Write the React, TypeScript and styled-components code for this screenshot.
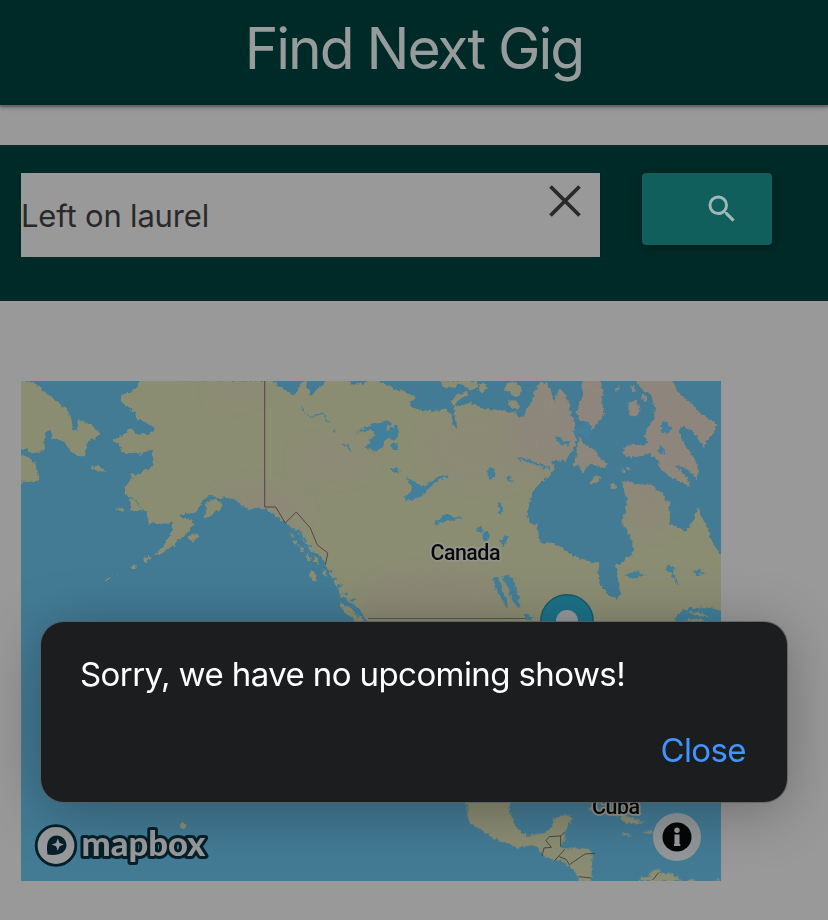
import React from 'react';
import styled, { createGlobalStyle } from 'styled-components';

const GlobalStyle = createGlobalStyle`
  * { box-sizing: border-box; }
  body {
    margin: 0;
    background: #999999;
    font-family: Inter, "Liberation Sans", sans-serif;
    overflow: hidden;
  }
`;

const Page = styled.div`
  width: 828px;
  height: 920px;
  overflow: hidden;
  background: #999999;
`;

const NavBar = styled.header`
  height: 105px;
  display: flex;
  justify-content: center;
  background: #002a27;
  box-shadow: 0 3px 3px rgba(0, 0, 0, 0.18), 0 1px 8px rgba(0, 0, 0, 0.12), 0 2px 1px rgba(0, 0, 0, 0.14);
`;

const Brand = styled.h1`
  margin: 0;
  font-size: 57px;
  line-height: 98px;
  font-weight: 400;
  letter-spacing: -2.05px;
  white-space: nowrap;
  color: #969c9b;
`;

const SearchBar = styled.section`
  height: 156px;
  margin-top: 40px;
  padding: 28px 21px 0;
  display: flex;
  align-items: flex-start;
  gap: 42px;
  background: #002a27;
`;

const SearchField = styled.div`
  width: 579px;
  height: 84px;
  padding: 0 17px 0 0;
  display: flex;
  justify-content: space-between;
  background: #999999;
`;

const Query = styled.span`
  line-height: 86px;
  font-size: 31px;
  letter-spacing: -0.18px;
  color: #292929;
`;

const IconButton = styled.button`
  width: 36px;
  height: 36px;
  margin-top: 10px;
  padding: 0;
  border: 0;
  background: none;
  svg { display: block; }
`;

const SubmitButton = styled.button`
  width: 130px;
  height: 72px;
  padding: 0 32px 0 0;
  display: flex;
  align-items: center;
  justify-content: flex-end;
  border: 0;
  border-radius: 4px;
  background: #105f5d;
  box-shadow: 0 4px 5px rgba(0, 0, 0, 0.16), 0 2px 8px rgba(0, 0, 0, 0.12);
`;

const MapFrame = styled.main`
  width: 700px;
  height: 500px;
  margin: 80px 0 0 21px;
  svg { display: block; }
`;

const Dialog = styled.div`
  position: absolute;
  left: 41px;
  top: 622px;
  width: 746px;
  height: 180px;
  padding: 31px 41px 0 39px;
  display: flex;
  flex-direction: column;
  border-radius: 23px;
  background: #1c1d1f;
  box-shadow: 0 0 0 1px rgba(90, 92, 94, 0.75), 0 8px 60px rgba(0, 0, 0, 0.3);
`;

const Message = styled.p`
  margin: 0;
  font-size: 33px;
  line-height: 42px;
  letter-spacing: -0.59px;
  white-space: nowrap;
  color: #ffffff;
`;

const CloseButton = styled.button`
  align-self: flex-end;
  margin: 34px 0 0;
  padding: 0;
  border: 0;
  background: none;
  font: 400 33px/42px Inter, "Liberation Sans", sans-serif;
  letter-spacing: -0.6px;
  color: #4293ff;
`;

const MapLabel = styled.text`
  font-family: Roboto, sans-serif;
  font-weight: 500;
  font-size: 21.5px;
  fill: #08090a;
  stroke: #93948c;
  stroke-width: 3.5px;
  stroke-linejoin: round;
  paint-order: stroke;
`;

const Wordmark = styled.text`
  font-family: Lato, sans-serif;
  font-weight: 900;
  font-size: 35px;
  fill: #999a9c;
  stroke: #06202b;
  stroke-width: 6px;
  stroke-linejoin: round;
  paint-order: stroke;
`;

const MAINLAND =
  'M358 30L352 50 340 64 322 68 304 74 302 92 315 105 330 115 345 130 352 148 372 153 384 160 388 167 404 172 400 183 385 195 365 190 345 192 342 178 330 175 318 188 300 198 278 212 295 222 305 232 302 245 320 252 345 248 365 252 385 242 396 240 395 252 400 270 398 290 385 298 360 308 345 318 334 330 318 345 314 370 325 380 350 390 360 405 365 422 372 415 380 430 384 450 386 464 400 456 415 462 430 456 445 462 460 455 455 475 452 495 440 510 430 530 410 545 402 556 415 556 430 548 445 535 465 528 475 510 490 500 505 485 520 465 518 450 505 445 480 440 485 432 515 430 535 420 541 402 552 388 570 378 590 380 600 385 625 380 650 392 665 408 690 418 720 415 735 418 760 430 780 448 800 460 812 472 826 480 840 498 855 520 872 545 890 550 905 565 920 590 928 610 940 635 955 655 962 680 978 688 1000 705 1022 722 1035 745 1045 760V900H2110V565L2085 530 2070 500 2060 470 2050 450 2042 430 2035 410 2025 430 2020 455 2005 475 1990 482 1970 470 1955 465 1948 470 1950 440 1945 420 1952 395 1935 388 1928 370 1910 360 1898 345 1880 345 1860 345 1840 340 1820 332 1810 335 1812 360 1820 390 1818 420 1805 460 1820 480 1835 510 1840 545 1825 560 1810 575 1788 585 1792 610 1795 640 1800 670 1790 690 1765 675 1750 655 1738 640 1735 610 1738 580 1710 575 1680 565 1645 548 1620 530 1595 518 1560 520 1555 490 1552 465 1525 460 1522 430 1530 390 1545 355 1570 330 1595 310 1605 290 1595 278 1610 270 1635 272 1650 250 1665 225 1668 205 1660 180 1665 165 1652 130 1645 100 1635 75 1620 55 1610 75 1602 100 1592 60 1580 40 1560 38 1545 60 1540 85 1530 105 1520 115 1512 142 1492 138 1488 125 1465 128 1440 120 1410 118 1385 118 1370 105 1350 98 1330 105 1305 108 1302 130 1308 150 1313 180 1300 165 1294 135 1280 115 1250 122 1210 122 1175 112 1170 95 1190 85 1180 75 1130 60 1105 45 1080 38V30H1040L1030 46 1015 38 1000 46 985 30H918L905 50 890 58 885 70 872 77 868 60 858 50 862 34 848 36 832 58 830 76 805 65 780 52 758 33Z';

const ISLANDS = [
  'M0 33H25L50 45 75 65 105 90 130 110 150 130 155 155 160 180 175 185 172 150 190 155 215 165 240 190 225 205 205 212 200 235 195 255 180 262 160 250 145 235 130 212 115 210 95 205 92 180 80 185 72 210 75 235 60 248 35 250 15 235 0 240Z',
  'M0 255L20 258 45 280 55 310 58 330 35 335 0 335Z',
  'M1845 30L1870 60 1892 75 1904 110 1905 145 1880 180 1875 200 1885 215 1870 228 1840 222 1815 230 1810 250 1830 262 1860 258 1890 250 1912 270 1925 300 1960 325 1990 340 2012 352 2000 325 1980 300 1963 290 1975 284 2005 300 2030 325 2035 300 2025 270 2005 240 1985 210 1976 185 1985 170 2000 172 2020 185 2040 215 2052 230 2065 205 2080 190 2090 165 2070 150 2040 130 2020 105 2000 90 1980 75 1965 50 1960 30Z',
  'M1690 30H1740L1748 60 1745 100 1752 130 1730 160 1715 180 1700 160 1680 150 1670 130 1680 100 1692 75 1685 50Z',
  'M1680 200L1695 225 1725 240 1740 265 1765 283 1750 292 1725 285 1705 285 1685 308 1675 285 1655 290 1670 265 1670 235Z',
  'M1826 98L1850 92 1858 120 1850 140 1826 136Z',
  'M1712 328L1730 316 1740 326 1726 342 1712 340Z',
  'M1772 345L1784 336 1784 356 1774 360Z',
  'M1805 296l10 4 2 8-12-4zM1822 291l8 3-2 7-7-3z',
  'M1458 44L1485 36 1505 55 1498 78 1478 80 1470 66 1455 62Z',
  'M1465 90L1490 92 1500 112 1488 120 1465 105Z',
  'M1292 96L1308 76 1340 64 1346 76 1318 86 1310 98 1298 108Z',
  'M1260 34L1370 32 1375 55 1350 60 1330 45 1318 38 1302 55 1270 50Z',
  'M1380 40l15 2 6 14-14 14-10-8z',
  'M1835 48l8-2 2 14-8 4zM1864 76l12 0 6 12-10 10zM1788 55l8-8 2 10-8 8z',
  'M555 402L575 388 595 390 608 405 600 420 580 425 565 440 552 446 560 425Z',
  'M328 388l16-2 12 14-5 6-18-2z',
  'M332 406l24-2 10 16-20 4-18-4z',
  'M286 414l18-2 10 8-10 6z',
  'M210 290l14 2 12-4 12 10 9 5-14 4-12-8-18-2z',
  'M332 312l9-3 4 9-11 10z',
  'M502 504l16-14 10 4 8-3 2 9-14 8-6 10-6-9z',
  'M370 572l12-14 15 5-12 4-8 10zM330 594l10-10 11 4-8 8-10 2zM291 610l5 2-4 4zM257 628l16-6-6 8-4 6z',
  'M867 605l14-2 9 12-4 20-14-10z',
  'M808 488l10 4 4 14-8-4zM818 508l12 4 6 14-10-2zM836 530l12 2 6 16-12-4zM856 552l12 4 6 16-12-4zM880 558l12 8 4 16-14-6zM908 596l8 10 2 14-8-6z',
  'M960 700l20 4 22 14 18 20 14 20-24 0-14-16-18-10-12-18z',
];

const WATERS = [
  'M1005 188L1060 160 1105 151 1112 165 1096 172 1098 180 1132 166 1134 205 1122 212 1108 202 1092 215 1090 230 1065 244 1050 238 1032 236 1048 220 1054 202 1066 198 1058 180Z',
  'M1112 222l20-2 3 20-10 4z',
  'M1115 296l12-6 12 16-2 5-20-6z',
  'M1158 322L1178 330 1196 342 1208 350 1240 332 1252 318 1280 316 1283 322 1258 328 1240 344 1222 360 1206 378 1186 388 1156 392 1150 378 1164 376 1172 366 1176 350Z',
  'M1245 456L1262 440 1284 434 1300 440 1330 443 1302 450 1280 453 1260 460 1248 470Z',
  'M1370 474l12-6 7 12-10 12zM1390 488l12-6 6 12-8 24-10-6z',
  'M1400 300l14-8 10 4 0 24-14 6-10-10z',
  'M1458 320l12-4 2 14 10 4-12 2z',
  'M1436 394l8 8 6 12-6 20-8-4 2-14-7-6z',
  'M1440 516l14-16 10-2-4 16-12 18z',
  'M1418 622L1434 620 1440 640 1446 662 1460 688 1466 715 1454 706 1440 674 1424 650Z',
  'M1448 618L1468 614 1484 640 1496 680 1498 712 1488 710 1480 690 1468 672 1466 654 1452 634Z',
  'M1514 730l14 4 10 8-8 12-12-3z',
  'M1494 262L1524 268 1556 280 1590 292 1592 298 1560 290 1526 276 1498 270Z',
  'M1600 198L1618 202 1632 216 1650 212 1644 228 1620 220Z',
  'M1660 180l20-8 14-20 16 10 4 26-16 20-12-16-20 4z',
  'M1922 160L1935 150 1948 168 1960 176 1940 190 1925 188Z',
  'M1912 240l8-15 15 18-5 10-16-4z',
  'M1814 615l26-8 16-8-2 12 26 4-26 6-20 5z',
  'M1936 590l16-6 15 12-10 8 12 20 8 22-12-14-12-24-16-6z',
  'M2020 608l18-15 5 12 16 5-30 5z',
  'M1962 750L1980 726 2010 714 2050 712 2085 716 2110 725 2110 760 1975 757Z',
  'M1974 402l6-4-2 14-6-2z',
];

const TEXTURE = [
  [1880, 100, 270, 260, 0.95],
  [1640, 160, 180, 150, 0.75],
  [1400, 230, 190, 110, 0.3],
  [1880, 400, 90, 80, 0.5],
  [700, 380, 90, 26, 0.6],
  [940, 270, 110, 50, 0.35],
  [1250, 690, 210, 80, 0.45],
  [640, 70, 70, 24, 0.25],
  [760, 420, 90, 28, 0.7],
];

const INLETS =
  'M808 470l14 16-2 18 12 10-4 16 16 8M835 475l8 24 14 12-6 18 12 8 6 24M858 530l16 34M962 690l-12-20M970 700l30 18 16 28M990 700l22 22 26 36M925 600l14 4M935 628l16-4M950 650l18-6M968 676l16-8M990 692l14-4M820 480l16 6M838 508l18-4M855 530l18-2';

function MapView() {
  return (
    <svg width="700" height="500" viewBox="21 381 700 500" aria-label="Map of North America">
      <defs>
        <filter id="coast" x="-5%" y="-5%" width="110%" height="110%">
          <feTurbulence type="fractalNoise" baseFrequency="0.28" numOctaves="2" seed="4" />
          <feDisplacementMap in="SourceGraphic" scale="5" xChannelSelector="R" yChannelSelector="G" />
        </filter>
        <filter id="soft" x="-50%" y="-50%" width="200%" height="200%">
          <feGaussianBlur stdDeviation="24" />
        </filter>
        <clipPath id="landClip">
          <path d={MAINLAND} />
          {ISLANDS.map((d) => <path key={d} d={d} />)}
        </clipPath>
      </defs>
      <rect x="21" y="381" width="700" height="500" fill="#437b95" />
      <g filter="url(#coast)">
        <g transform="translate(20 370) scale(.33333)">
          <g fill="#8b8d73">
            <path d={MAINLAND} />
            {ISLANDS.map((d) => <path key={d} d={d} />)}
          </g>
          <g clipPath="url(#landClip)">
            <g filter="url(#soft)" fill="#8e867c">
              {TEXTURE.map(([cx, cy, rx, ry, opacity]) => (
                <ellipse key={`${cx}-${cy}`} cx={cx} cy={cy} rx={rx} ry={ry} opacity={opacity} />
              ))}
            </g>
          </g>
          <g fill="#437f9b">
            {WATERS.map((d) => <path key={d} d={d} />)}
          </g>
          <path d="M2000 724L2040 728 2075 742 2030 738ZM1990 752l40-8 30 6-20 10z" fill="#8b8d73" />
          <path d="M846 110l6 18 18 14 38-12 12 16 6 16M938 180l8 4M970 222l18 10 2 14" fill="none" stroke="#437f9b" strokeWidth="4" />
          <path d={INLETS} fill="none" stroke="#437f9b" strokeWidth="5" />
        </g>
        <g transform="translate(430 780) scale(.33333)">
          <g fill="#8b8d73">
            <path d="M95 55L112 80 112 110 120 130 150 148 190 175 230 190 265 204 300 196 320 200 342 228 370 242 390 238 410 252 428 268 445 290 450 304H484L484 270 488 225 480 208 455 204 420 206 400 206 390 200 402 180 404 160 410 145 428 115 412 105 385 108 370 120 360 150 340 160 320 162 290 168 265 150 248 120 238 90 242 55Z" />
            <path d="M470 88l20-6 24 8 30 0 22 10 26 8 22 8 30 10-30 6-30-6-14-18-34-6z" />
            <path d="M574 160l20 0 12 6-20 2zM638 156l28-2 14 5-20 4zM680 130l30-5 32 12 8 20-30 8-30-10z" />
            <path d="M625 304L632 290 655 290 662 275 688 264 692 280 720 280 740 290 755 300 745 304ZM770 300l15-3 12 7h-30zM845 302l18-8 5 6-10 5z" />
          </g>
        </g>
        <path d="M182 821l4 3-2 6-4-3z" fill="#8b8d73" />
      </g>
      <path d="M264.7 381V507l11 0 9.600 16 11-11 14 16 7 17 10.500 8-2.500 12" fill="none" stroke="#56424b" strokeWidth="1" />
      <path d="M368 618.500H526" stroke="#595a4d" strokeWidth="1" />
      <g transform="translate(430 780) scale(.33333)" fill="none" stroke="#464940" strokeWidth="3">
        <path d="M336 228L342 204 364 202 348 182 358 170 392 168 392 200M392 168L404 156M404 208L374 242M388 230L408 238 418 254 465 222 495 220M447 290L484 294M686 278L668 300" />
      </g>
      <circle cx="567" cy="621" r="26.200" fill="#1d7289" stroke="#155c66" strokeWidth="1.400" />
      <circle cx="567" cy="621" r="11" fill="#98999d" />
      <MapLabel x="430.500" y="559.500" textLength="70">Canada</MapLabel>
      <MapLabel x="592" y="813.500" textLength="48">Cuba</MapLabel>
      <g>
        <circle cx="56" cy="845.500" r="19.800" fill="#999a9c" stroke="#06202b" strokeWidth="2.800" />
        <path d="M47.500 854.500C45.500 842 49 835.500 57 835.500a9.500 9.500 0 0 1 9.500 9.500C66.500 852 59 856.500 47.500 854.500Z" fill="#06202b" />
        <path d="M57.800 838.500l1.700 4.400 4.400 1.700-4.400 1.700-1.700 4.400-1.700-4.400-4.400-1.700 4.400-1.700z" fill="#999a9c" />
        <Wordmark x="81.500" y="856" textLength="124" lengthAdjust="spacingAndGlyphs">mapbox</Wordmark>
      </g>
      <circle cx="677" cy="837" r="24" fill="#92979a" />
      <circle cx="677" cy="837" r="14.500" fill="#050606" />
      <circle cx="677" cy="830.300" r="2.700" fill="#999c9e" />
      <path d="M674.500 834.500h5v9.500h.8v2h-6.300v-2h.5z" fill="#999c9e" />
    </svg>
  );
}

export default function App() {
  return (
    <>
      <GlobalStyle />
      <Page>
        <NavBar><Brand>Find Next Gig</Brand></NavBar>
        <SearchBar>
          <SearchField>
            <Query>Left on laurel</Query>
            <IconButton aria-label="Clear">
              <svg width="36" height="36" viewBox="0 0 36 36">
                <path d="M3.500 3.500L32.500 32.500M32.500 3.500L3.500 32.500" stroke="#292929" strokeWidth="3.800" />
              </svg>
            </IconButton>
          </SearchField>
          <SubmitButton aria-label="Search">
            <svg width="36" height="36" viewBox="0 0 24 24" fill="#9fb7b6">
              <path d="M15.500 14h-.79l-.28-.27A6.471 6.471 0 0 0 16 9.500 6.500 6.500 0 1 0 9.500 16c1.610 0 3.090-.59 4.230-1.570l.27.28v.79l5 4.990L20.490 19l-4.990-5zm-6 0C7.010 14 5 11.990 5 9.500S7.010 5 9.500 5 14 7.010 14 9.500 11.990 14 9.500 14z" />
            </svg>
          </SubmitButton>
        </SearchBar>
        <MapFrame><MapView /></MapFrame>
      </Page>
      <Dialog role="alertdialog">
        <Message>Sorry, we have no upcoming shows!</Message>
        <CloseButton>Close</CloseButton>
      </Dialog>
    </>
  );
}
